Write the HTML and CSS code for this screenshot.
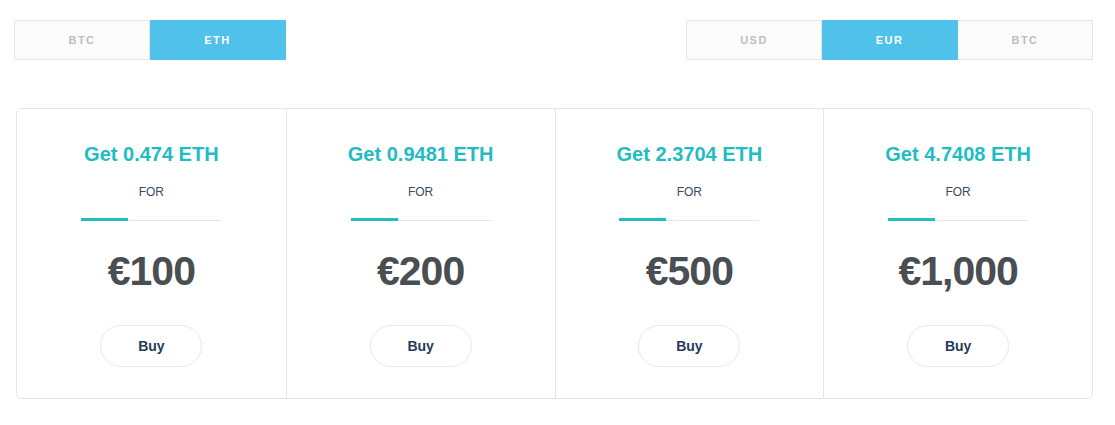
FILE: index.html
```html
<!DOCTYPE html>
<html lang="en">
<head>
  <meta charset="UTF-8" />
  <meta name="viewport" content="width=device-width, initial-scale=1" />
  <title>Buy ETH</title>
  <link rel="stylesheet" href="styles.css">
</head>
<body>
  <div class="page">
    <div class="toolbar">
      <div class="toggle">
        <button class="toggle-btn" type="button">BTC</button>
        <button class="toggle-btn active" type="button">ETH</button>
      </div>
      <div class="toggle">
        <button class="toggle-btn" type="button">USD</button>
        <button class="toggle-btn active" type="button">EUR</button>
        <button class="toggle-btn" type="button">BTC</button>
      </div>
    </div>

    <div class="offers">
      <div class="offer">
        <div class="offer-title">Get 0.474 ETH</div>
        <div class="offer-for">FOR</div>
        <div class="offer-line"><span></span></div>
        <div class="offer-price">€100</div>
        <button class="buy-btn" type="button">Buy</button>
      </div>
      <div class="offer">
        <div class="offer-title">Get 0.9481 ETH</div>
        <div class="offer-for">FOR</div>
        <div class="offer-line"><span></span></div>
        <div class="offer-price">€200</div>
        <button class="buy-btn" type="button">Buy</button>
      </div>
      <div class="offer">
        <div class="offer-title">Get 2.3704 ETH</div>
        <div class="offer-for">FOR</div>
        <div class="offer-line"><span></span></div>
        <div class="offer-price">€500</div>
        <button class="buy-btn" type="button">Buy</button>
      </div>
      <div class="offer">
        <div class="offer-title">Get 4.7408 ETH</div>
        <div class="offer-for">FOR</div>
        <div class="offer-line"><span></span></div>
        <div class="offer-price">€1,000</div>
        <button class="buy-btn" type="button">Buy</button>
      </div>
    </div>
  </div>
</body>
</html>
```

FILE: styles.css
```css
html, body {
  margin: 0;
  padding: 0;
  background: #fff;
  font-family: "Liberation Sans", Arial, sans-serif;
  -webkit-font-smoothing: antialiased;
}
.page {
  padding: 20px 22px 0 14px;
}
.toolbar {
  display: flex;
  justify-content: space-between;
}
.toggle {
  display: flex;
}
.toggle-btn {
  box-sizing: border-box;
  width: 136px;
  height: 40px;
  margin: 0;
  border: 1px solid #e3e6e7;
  border-left: none;
  background: #fbfbfb;
  color: #bcbec0;
  font-family: inherit;
  font-size: 11px;
  font-weight: 700;
  letter-spacing: 1.5px;
  cursor: pointer;
}
.toggle-btn:first-child {
  border-left: 1px solid #e3e6e7;
}
.toggle-btn:nth-child(3) {
  width: 135px;
}
.toggle-btn.active {
  background: #50c1e9;
  border-color: #50c1e9;
  color: #fff;
}
.offers {
  display: grid;
  grid-template-columns: repeat(4, 1fr);
  margin: 48px 0 0 2px;
  border: 1px solid #e3e6e7;
  border-radius: 6px;
}
.offer {
  display: flex;
  flex-direction: column;
  align-items: center;
  padding: 33px 0 31px;
  border-left: 1px solid #e3e6e7;
}
.offer:first-child {
  border-left: none;
}
.offer-title {
  color: #22bcc3;
  font-size: 20px;
  font-weight: 700;
  line-height: 24px;
}
.offer-for {
  margin-top: 19px;
  color: #3b4a61;
  font-size: 12px;
  line-height: 14px;
}
.offer-line {
  width: 140px;
  height: 3px;
  margin-top: 19px;
  border-bottom: 1px solid #e3e5e6;
  box-sizing: border-box;
}
.offer-line span {
  display: block;
  width: 47px;
  height: 3px;
  background: #22bcc3;
}
.offer-price {
  margin-top: 26px;
  color: #494e52;
  font-size: 41px;
  font-weight: 700;
  letter-spacing: -1px;
  line-height: 48px;
}
.buy-btn {
  margin-top: 30px;
  width: 102px;
  height: 42px;
  border: 1px solid #e6eaea;
  border-radius: 21px;
  background: #fff;
  color: #273a58;
  font-family: inherit;
  font-size: 14px;
  font-weight: 700;
  cursor: pointer;
}
```
